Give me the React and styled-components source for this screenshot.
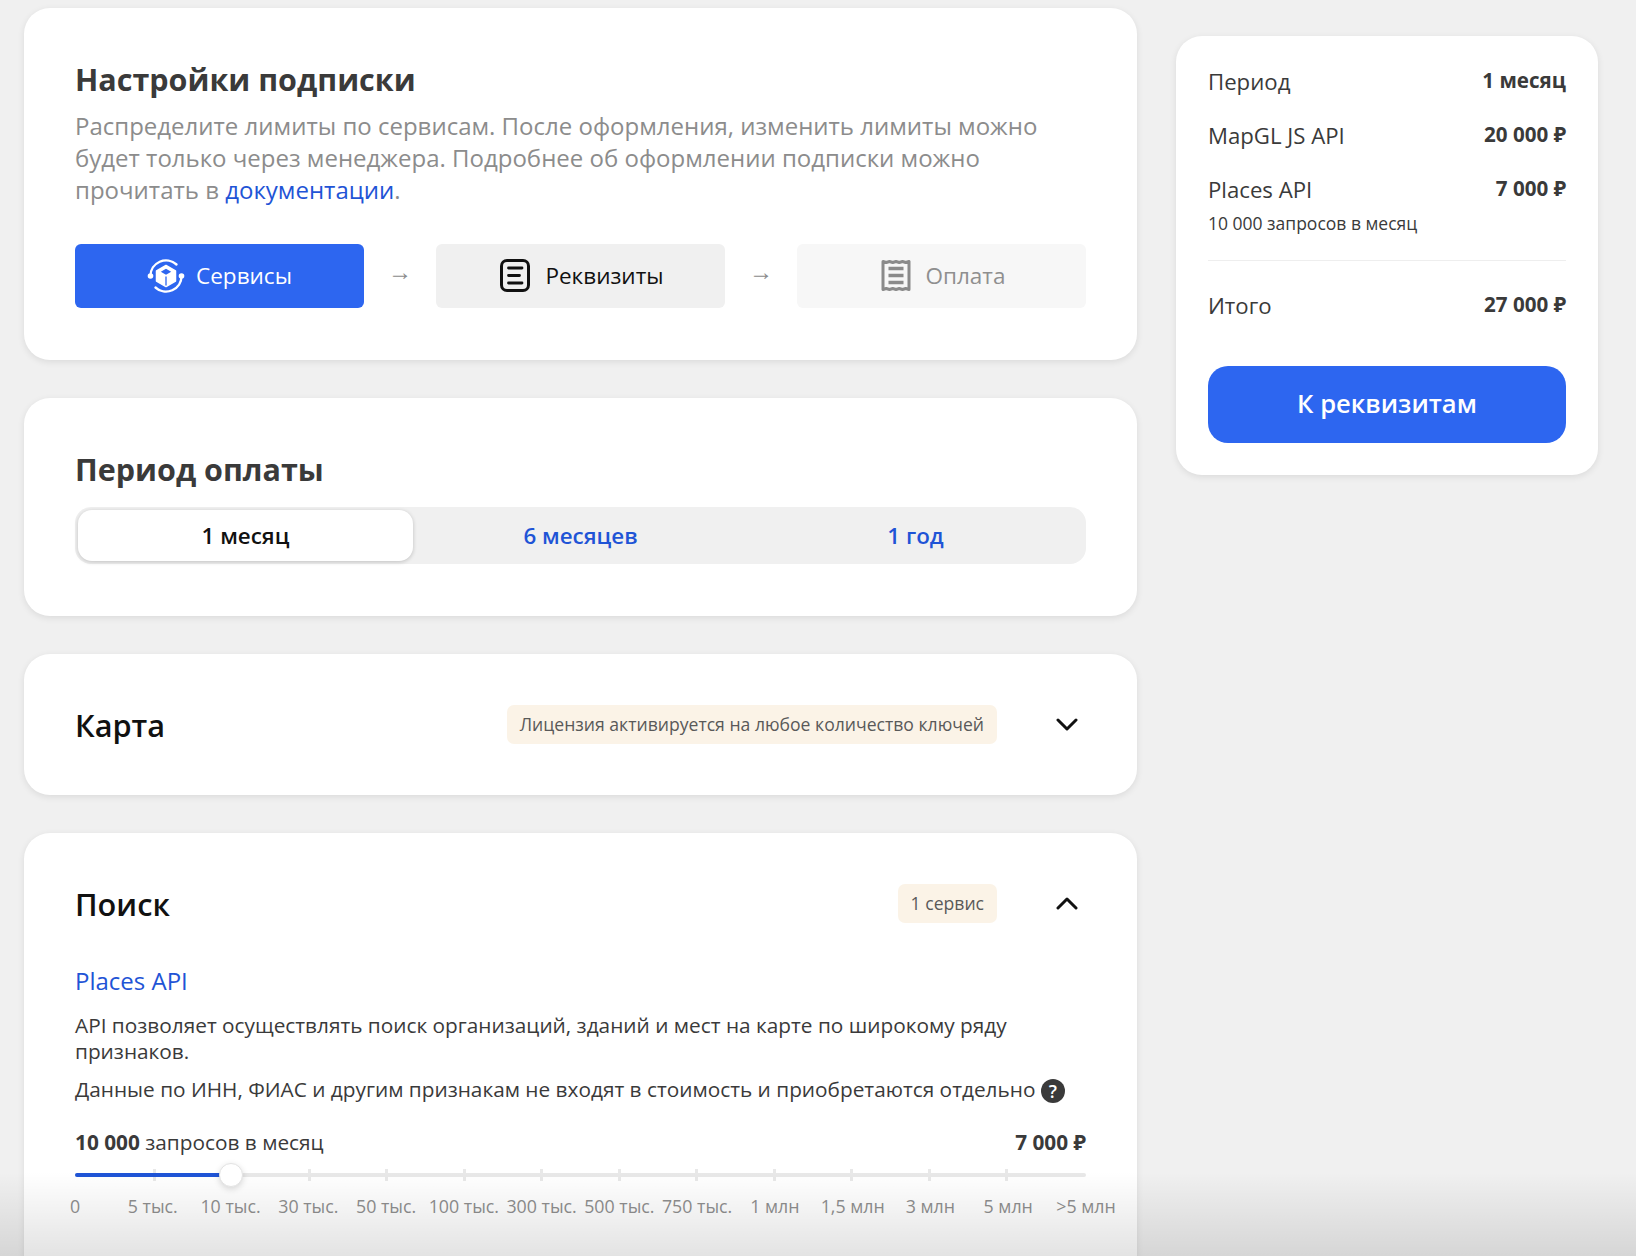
import React from 'react';
import styled, { createGlobalStyle } from 'styled-components';

const marks = ['0', '5 тыс.', '10 тыс.', '30 тыс.', '50 тыс.', '100 тыс.', '300 тыс.', '500 тыс.', '750 тыс.', '1 млн', '1,5 млн', '3 млн', '5 млн', '>5 млн'];
const current = 2;

function ServicesIcon() {
  return (
    <svg width="38" height="36" viewBox="0 0 38 36" fill="none">
      <path d="M3.500 18A15.500 15.500 0 0 1 29.500 6.500" stroke="#fff" strokeWidth="2.400" strokeLinecap="round"/>
      <path d="M34.500 18A15.500 15.500 0 0 1 8.500 29.500" stroke="#fff" strokeWidth="2.400" strokeLinecap="round"/>
      <path d="M19 7.500l9.500 5.500v10L19 28.500 9.500 23V13z" fill="#fff" stroke="#fff" strokeWidth="1.500" strokeLinejoin="round"/>
      <path d="M19 10.800l5.200 3-5.200 3-5.200-3z" fill="#2D66F0"/>
      <path d="M19 18.500v9" stroke="#2D66F0" strokeWidth="1.300"/>
      <circle cx="3.500" cy="18" r="2.800" fill="#fff"/>
      <circle cx="34.500" cy="18" r="2.800" fill="#fff"/>
    </svg>
  );
}

function DetailsIcon() {
  return (
    <svg width="30" height="33" viewBox="0 0 30 33" fill="none">
      <rect x="1.500" y="1.500" width="27" height="30" rx="5.500" stroke="#111" strokeWidth="3"/>
      <path d="M8.500 9h13.500M8.500 16.500h11M8.500 24h13.500" stroke="#111" strokeWidth="2.800" strokeLinecap="round"/>
    </svg>
  );
}

function ReceiptIcon() {
  return (
    <svg width="30" height="33" viewBox="0 0 30 33" fill="none">
      <path d="M2 2.500l3.250 1L8.500 2.500l3.250 1L15 2.500l3.250 1 3.250-1 3.250 1L28 2.500v28l-3.250-1-3.250 1-3.250-1L15 30.500l-3.250-1-3.250 1-3.250-1L2 30.500z" stroke="#8A8A8A" strokeWidth="3" strokeLinejoin="round"/>
      <path d="M7.500 9.500h15M7.500 16.500h15M7.500 23.500h15" stroke="#8A8A8A" strokeWidth="3.400"/>
    </svg>
  );
}

function Chevron({ up }) {
  return (
    <svg width="24" height="14" viewBox="0 0 24 14" fill="none">
      <path d={up ? 'M3 11L12 2l9 9' : 'M3 2l9 9 9-9'} stroke="#111" strokeWidth="3" strokeLinecap="round" strokeLinejoin="round"/>
    </svg>
  );
}

export default function App() {
  return (
    <Page>
      <GlobalStyle/>
      <Main>
        <Card>
          <Title>Настройки подписки</Title>
          <Lead>
            Распределите лимиты по сервисам. После оформления, изменить лимиты можно будет только через менеджера. Подробнее об оформлении подписки можно прочитать в <Link>документации</Link>.
          </Lead>
          <Steps>
            <Step $state="active"><ServicesIcon/>Сервисы</Step>
            <Arrow>→</Arrow>
            <Step $state="next"><DetailsIcon/>Реквизиты</Step>
            <Arrow>→</Arrow>
            <Step $state="disabled"><ReceiptIcon/>Оплата</Step>
          </Steps>
        </Card>

        <Card>
          <PeriodTitle>Период оплаты</PeriodTitle>
          <Tabs>
            <Tab $active>1 месяц</Tab>
            <Tab>6 месяцев</Tab>
            <Tab>1 год</Tab>
          </Tabs>
        </Card>

        <Card $collapsed>
          <GroupHead>
            <GroupName>Карта</GroupName>
            <Badge>Лицензия активируется на любое количество ключей</Badge>
            <Toggle><Chevron/></Toggle>
          </GroupHead>
        </Card>

        <Card $open>
          <GroupHead>
            <GroupName>Поиск</GroupName>
            <Badge>1 сервис</Badge>
            <Toggle><Chevron up/></Toggle>
          </GroupHead>
          <ServiceName>Places API</ServiceName>
          <Description>API позволяет осуществлять поиск организаций, зданий и мест на карте по широкому ряду признаков.</Description>
          <Description>
            Данные по ИНН, ФИАС и другим признакам не входят в стоимость и приобретаются отдельно <Hint>?</Hint>
          </Description>
          <SliderHead>
            <span><b>10 000</b> запросов в месяц</span>
            <b>7 000 ₽</b>
          </SliderHead>
          <Track>
            <Ticks>
              {marks.map((m, i) => <Tick key={m} $hidden={i === 0 || i === marks.length - 1 || i === current}/>)}
            </Ticks>
            <Fill style={{ width: `${(current / (marks.length - 1)) * 100}%` }}>
              <Thumb/>
            </Fill>
          </Track>
          <Marks>
            {marks.map(m => <Mark key={m}><span>{m}</span></Mark>)}
          </Marks>
        </Card>
      </Main>

      <Side>
        <Row><span>Период</span><b>1 месяц</b></Row>
        <Row><span>MapGL JS API</span><b>20 000 ₽</b></Row>
        <Row $tight><span>Places API</span><b>7 000 ₽</b></Row>
        <Note>10 000 запросов в месяц</Note>
        <Divider/>
        <Row><span>Итого</span><b>27 000 ₽</b></Row>
        <Submit>К реквизитам</Submit>
      </Side>
      <Fade/>
    </Page>
  );
}

const GlobalStyle = createGlobalStyle`
  html, body {
    margin: 0;
    height: 1256px;
    overflow: hidden;
    background: #F0F0F0;
  }
  body {
    font-family: "Open Sans", "Noto Sans", sans-serif;
  }
  * {
    box-sizing: border-box;
  }
`;

const Page = styled.div`
  position: relative;
  display: flex;
  align-items: flex-start;
  gap: 39px;
  height: 1256px;
  padding: 8px 0 0 24px;
  overflow: hidden;
`;

const Main = styled.div`
  display: flex;
  flex-direction: column;
  flex: none;
  gap: 38px;
  width: 1113px;
`;

const Card = styled.section`
  background: #FFFFFF;
  border-radius: 26px;
  box-shadow: 0 2px 7px rgba(0, 0, 0, 0.09);
  padding: ${p => p.$collapsed ? '51px 51px 0' : p.$open ? '51px 51px 80px' : '51px 51px 52px'};
  height: ${p => p.$collapsed ? '141px' : 'auto'};
`;

const Title = styled.h1`
  margin: 0;
  color: #3A3A3A;
  font-size: 30.500px;
  line-height: 40px;
  font-weight: 700;
`;

const Lead = styled.p`
  margin: 11px 0 0;
  color: #8C8C8C;
  font-size: 24px;
  line-height: 32px;
`;

const Link = styled.span`
  color: #1F54D6;
`;

const Steps = styled.div`
  display: flex;
  align-items: center;
  margin-top: 38px;
`;

const Step = styled.div`
  display: flex;
  align-items: center;
  justify-content: center;
  gap: ${p => p.$state === 'active' ? '11px' : '15px'};
  flex: none;
  width: 289px;
  height: 64px;
  padding-left: ${p => p.$state === 'active' ? '0' : '3px'};
  padding-bottom: 1px;
  border-radius: 6px;
  font-size: 22.500px;
  background: ${p => ({ active: '#2D66F0', next: '#F0F0F0', disabled: '#F7F7F7' })[p.$state]};
  color: ${p => ({ active: '#FFFFFF', next: '#111111', disabled: '#8F8F8F' })[p.$state]};
`;

const Arrow = styled.div`
  flex: 1;
  margin-bottom: 12px;
  text-align: center;
  color: #8C8C8C;
  font-size: 24px;
`;

const PeriodTitle = styled(Title)`
  margin-bottom: 18px;
`;

const Tabs = styled.div`
  display: flex;
  height: 57px;
  padding: 3px;
  background: #F0F0F0;
  border-radius: 16px;
`;

const Tab = styled.div`
  flex: 1;
  display: flex;
  align-items: center;
  justify-content: center;
  border-radius: 14px;
  font-size: 22.400px;
  font-weight: 600;
  color: ${p => p.$active ? '#111111' : '#1F54D6'};
  background: ${p => p.$active ? '#FFFFFF' : 'transparent'};
  box-shadow: ${p => p.$active ? '0 1px 4px rgba(0, 0, 0, 0.2)' : 'none'};
`;

const GroupHead = styled.div`
  display: flex;
  align-items: center;
  height: 39px;
`;

const GroupName = styled.h2`
  margin: 0 auto 0 0;
  color: #111111;
  font-size: 30.700px;
  font-weight: 600;
`;

const Badge = styled.div`
  display: flex;
  align-items: center;
  height: 39px;
  padding: 0 13px 2px;
  background: #FBF3E7;
  border-radius: 7px;
  color: #595959;
  font-size: 17.600px;
`;

const Toggle = styled.div`
  display: flex;
  align-items: center;
  justify-content: flex-end;
  width: 89px;
  padding-right: 7px;
`;

const ServiceName = styled.div`
  margin-top: 42px;
  color: #1F54D6;
  font-size: 24px;
  line-height: 32px;
`;

const Description = styled.p`
  margin: 12px 0 0;
  color: #3A3A3A;
  font-size: 20.800px;
  line-height: 26px;

  ${ServiceName} + & {
    margin-top: 15px;
  }
`;

const Hint = styled.span`
  display: inline-flex;
  align-items: center;
  justify-content: center;
  width: 24px;
  height: 24px;
  border-radius: 50%;
  background: #3A3A3A;
  color: #FFFFFF;
  font-size: 18px;
  font-weight: 600;
  vertical-align: -1px;
`;

const SliderHead = styled.div`
  display: flex;
  justify-content: space-between;
  margin-top: 25px;
  color: #3A3A3A;
  font-size: 20.800px;
  line-height: 28px;
`;

const Track = styled.div`
  position: relative;
  height: 4px;
  margin-top: 17px;
  background: #E8E8E8;
  border-radius: 2px;
`;

const Fill = styled.div`
  position: relative;
  height: 4px;
  background: #1F54D6;
  border-radius: 2px;
`;

const Thumb = styled.div`
  position: absolute;
  right: -12px;
  top: -10px;
  width: 24px;
  height: 24px;
  border-radius: 50%;
  background: #FFFFFF;
  border: 1px solid #E3E3E3;
  box-shadow: 0 2px 6px rgba(0, 0, 0, 0.15);
  z-index: 2;
`;

const Ticks = styled.div`
  position: absolute;
  left: 0;
  right: 0;
  top: -4px;
  display: flex;
  justify-content: space-between;
`;

const Tick = styled.div`
  width: 3px;
  height: 12px;
  background: #E8E8E8;
  visibility: ${p => p.$hidden ? 'hidden' : 'visible'};
`;

const Marks = styled.div`
  display: flex;
  justify-content: space-between;
  margin-top: 17px;
`;

const Mark = styled.div`
  display: flex;
  justify-content: center;
  width: 0;
  color: #8F8F8F;
  font-size: 17.800px;
  line-height: 24px;
  white-space: nowrap;
`;

const Side = styled.aside`
  flex: none;
  width: 422px;
  margin-top: 28px;
  padding: 30px 32px 32px;
  background: #FFFFFF;
  border-radius: 26px;
  box-shadow: 0 2px 7px rgba(0, 0, 0, 0.09);
`;

const Row = styled.div`
  display: flex;
  justify-content: space-between;
  align-items: flex-start;
  margin-bottom: ${p => p.$tight ? '6px' : '23px'};
  color: #3A3A3A;
  font-size: 22.200px;
  line-height: 30px;

  span {
    padding-top: 1px;
  }

  b {
    margin-top: -1px;
    font-size: 20.600px;
    line-height: 30px;
  }
`;

const Note = styled.div`
  color: #3A3A3A;
  font-size: 17.500px;
  line-height: 24px;
`;

const Divider = styled.div`
  height: 1px;
  margin: 25px 0 29px;
  background: #EEEEEE;
`;

const Submit = styled.button`
  display: block;
  width: 100%;
  height: 77px;
  margin-top: 45px;
  padding-bottom: 3px;
  border: 0;
  border-radius: 20px;
  background: #2D66F0;
  color: #FFFFFF;
  font-family: inherit;
  font-size: 25.600px;
  font-weight: 600;
`;

const Fade = styled.div`
  position: absolute;
  left: 0;
  right: 0;
  bottom: 0;
  height: 84px;
  background: linear-gradient(rgba(0, 0, 0, 0), rgba(0, 0, 0, 0.11));
  pointer-events: none;
`;
